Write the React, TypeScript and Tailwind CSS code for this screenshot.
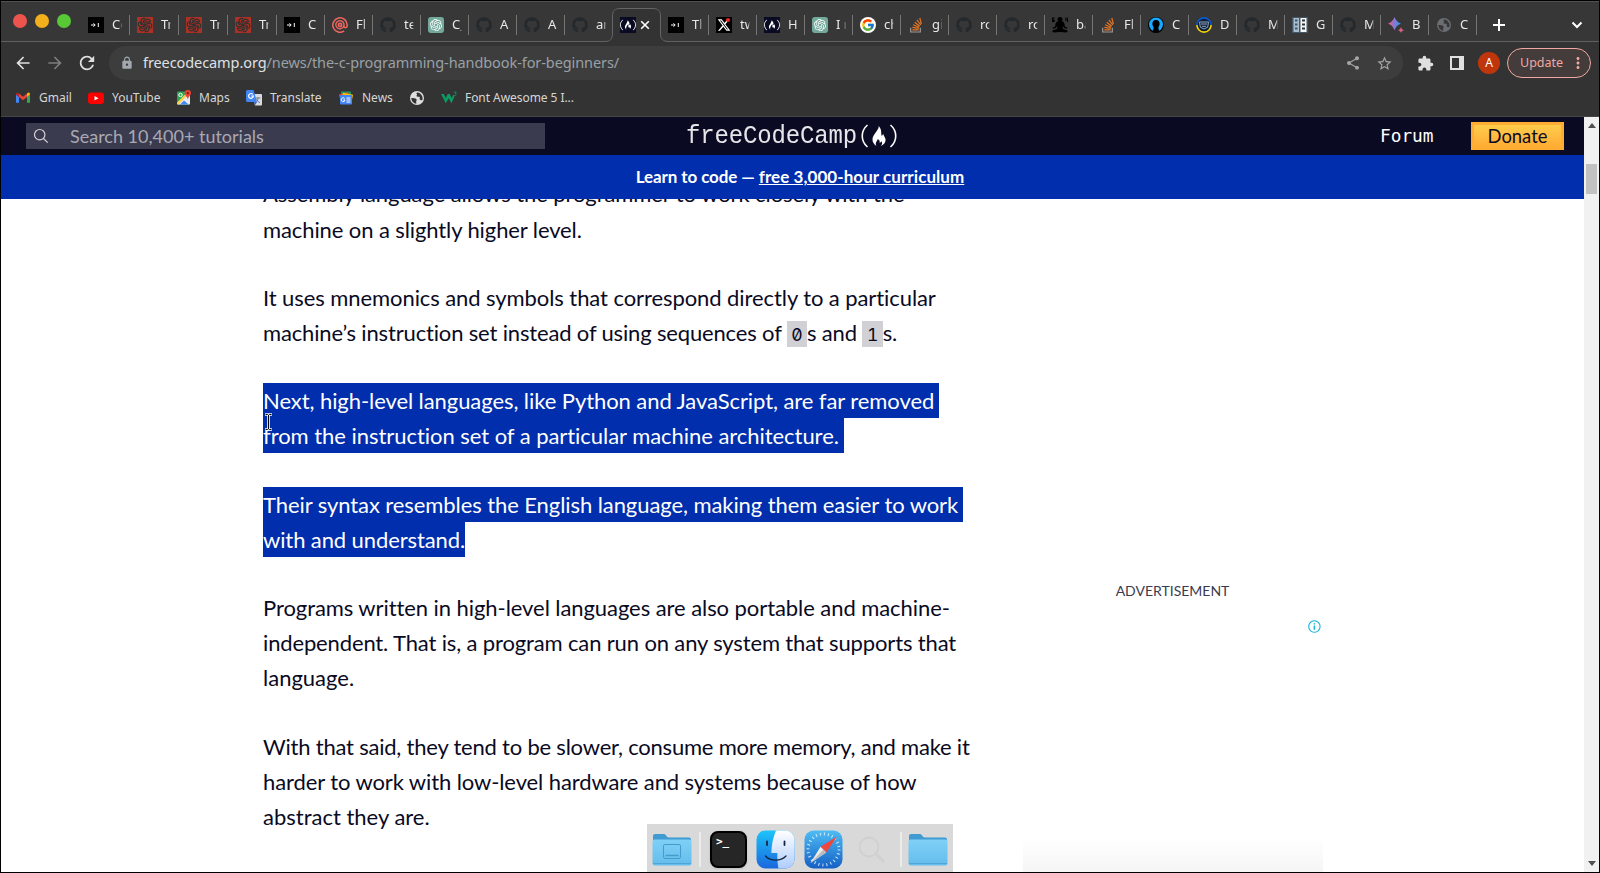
import type { ReactNode } from "react";
import { FaGithub, FaFreeCodeCamp } from "react-icons/fa";
import { FaXTwitter } from "react-icons/fa6";
import { FcGoogle } from "react-icons/fc";
import { SiOpenai } from "react-icons/si";
import {
  MdArrowBack,
  MdArrowForward,
  MdRefresh,
  MdLock,
  MdShare,
  MdStarBorder,
  MdExtension,
  MdMoreVert,
} from "react-icons/md";

const ArrowIcon = () => (
  <svg viewBox="0 0 16 16" className="size-4">
    <rect width="16" height="16" fill="#000" />
    <path d="M3 8h4M5.500 6.300 7.200 8 5.500 9.700M10.300 6v4" stroke="#fff" strokeWidth="1" fill="none" />
  </svg>
);

const CodewarsIcon = () => (
  <svg viewBox="0 0 16 16" className="size-4" fill="none" stroke="#33302f" strokeWidth="1.200" strokeLinecap="round">
    <rect width="16" height="16" fill="#ac3025" stroke="none" />
    {[0, 60, 120, 180, 240, 300].map((angle) => (
      <path key={angle} d="M8 8C7.500 5.500 8.200 3.300 10 2.300 11.800 1.800 13.200 3 13.600 4.600M9.500 5.400c1.100-1.100 2.500-.8 3 .1" transform={`rotate(${angle} 8 8)`} />
    ))}
  </svg>
);

const AtIcon = () => (
  <svg viewBox="0 0 16 16" className="size-4" fill="none" stroke="#f2675f">
    <circle cx="8" cy="8" r="1.600" strokeWidth="1.600" />
    <path d="M12.200 13.900A7.200 7.200 0 1 1 15.200 8v.6c0 2.700-3.300 2.700-3.500.3" strokeWidth="1.500" />
    <path d="M11.800 9A4.100 4.100 0 1 1 12 7.500V9" strokeWidth="1.400" />
  </svg>
);

const GithubIcon = () => <FaGithub className="size-4 text-[#24292e]" />;

const GptIcon = () => (
  <span className="flex size-4 items-center justify-center rounded-[3px] bg-[#74aa9c]">
    <SiOpenai className="size-3 text-white" />
  </span>
);

const FccIcon = () => (
  <span className="flex size-4 items-center justify-center bg-[#0a0a23]">
    <FaFreeCodeCamp className="size-4 text-white" />
  </span>
);

const XIcon = () => (
  <span className="relative flex size-4 items-center justify-center bg-black">
    <FaXTwitter className="size-3.5 text-white" />
    <span className="absolute top-px right-0.5 size-1 rounded-full bg-[#f4212e]" />
  </span>
);

const GoogleIcon = () => (
  <span className="flex size-4 items-center justify-center rounded-full bg-white">
    <FcGoogle className="size-3.5" />
  </span>
);

const StackIcon = () => (
  <svg viewBox="0 0 16 16" className="size-4" fill="none">
    <path d="M2.700 10.700v4.300h9.600v-4.300" stroke="#9a9c9f" strokeWidth="1.200" />
    <path d="M4.300 12.800h6.400M4.400 10.300l6.300 1M5.100 7.800l5.900 2.500M6.700 5.200l5 4M8.900 2.800l3.800 5.200M11.800 1l1.500 6.200" stroke="#e87722" strokeWidth="1.200" />
  </svg>
);

const MeditateIcon = () => (
  <svg viewBox="0 0 16 16" className="size-4" fill="#000">
    <path d="M0 .5h2.700v1H1v1h1.700v2.600H0zM13.300.5h1v2h.7v-2h1v4.600h-1V3.500h-1.700z" />
    <path d="M8 0a2.300 2.300 0 0 1 1.500 4.200c2 .4 2.600 1 3 2.800l.4 2.500 2.600 1.300-.4.900-2.900-.7L10.700 9l.2 2.700 4 1.500c1.100.6.800 2.200-.5 2.300L8 15l-6.400.5c-1.300-.1-1.600-1.700-.5-2.300l4-1.500L5.300 9l-1.500 2-2.900.7-.4-.9L3.100 9.500 3.500 7c.4-1.800 1-2.400 3-2.800A2.300 2.300 0 0 1 8 0z" />
  </svg>
);

const HeadIcon = () => (
  <svg viewBox="0 0 16 16" className="size-4">
    <circle cx="8" cy="8" r="8" fill="#000" />
    <circle cx="8" cy="7.500" r="7" fill="#18a8ff" />
    <path d="M8 3c2.500 0 3.800 1.800 3.600 4.200-.1 1.500-1 2.300-1.200 3.300l.8 4.700H4.800l.8-4.700c-.2-1-1.100-1.800-1.200-3.300C4.200 4.800 5.500 3 8 3z" fill="#000" />
  </svg>
);

const BadgeIcon = () => (
  <svg viewBox="0 0 16 16" className="size-4" fill="none">
    <circle cx="8" cy="8" r="7.600" fill="#0f1f38" />
    <path d="M.9 8a7.100 7.100 0 0 1 14.200 0" stroke="#0a5ad0" strokeWidth="1.600" />
    <path d="M.9 8a7.100 7.100 0 0 0 14.200 0" stroke="#f6d500" strokeWidth="1.600" />
    <path d="M3.500 5h9l-.8 5.200L8 12l-3.700-1.800z" stroke="#8fa6c0" />
    <path d="M5 7h6M6 9.300h4" stroke="#8fa6c0" />
  </svg>
);

const ColumnsIcon = () => (
  <svg viewBox="0 0 16 16" className="size-4">
    <rect width="16" height="16" fill="#435766" />
    <rect x="1.500" y="1" width="5.500" height="14" fill="#a9bccb" />
    <rect x="8.500" y="1" width="6" height="14" fill="#f7f7f7" />
    <path d="M3 3.500h2.500M3 7.500h2.500M3 11.500h2.500" stroke="#435766" strokeWidth="1.800" />
    <path d="M10 3.500h3M10 7.500h3M10 11.500h3" stroke="#30343a" strokeWidth="1.800" />
  </svg>
);

const SparkIcon = () => (
  <svg viewBox="0 0 16 16" className="size-4">
    <defs>
      <linearGradient id="spark" x1="0" y1="0" x2="1" y2="0">
        <stop offset="0" stopColor="#e8607e" />
        <stop offset=".45" stopColor="#9173cf" />
        <stop offset="1" stopColor="#1ba0f0" />
      </linearGradient>
    </defs>
    <path d="M6.500 0C7.900 3.500 9.500 5.100 13 6.500 9.500 7.900 7.900 9.700 6.500 13.300 5.100 9.700 3.500 7.900 0 6.500 3.500 5.100 5.100 3.500 6.500 0z" fill="url(#spark)" />
    <path d="M13 10c.6 1.900 1.200 2.600 3 3.200-1.800.6-2.400 1.200-3 2.800-.6-1.600-1.200-2.200-3-2.800 1.800-.6 2.400-1.300 3-3.200z" fill="#d95f80" />
  </svg>
);

const GlobeIcon = ({ land, sea }: { land: string; sea: string }) => (
  <svg viewBox="0 0 16 16" className="size-4">
    <circle cx="8" cy="8" r="7" fill={sea} />
    <path d="M2.300 8c2 .2 4.300.1 5.200 1.300.8 1.200-.8 1.800-.3 3l.2 1.500C4.500 13.500 2.400 11 2.300 8zM8.500 2.400c-1.400 0-1.300 1.200-.6 1.700.8.700-.9 1.200-.3 2.200.8 1 2.200-.2 3 .8.700 1-.4 1.600.4 2.700.7.800 1.900.4 2.400.1C14.400 6.500 12 2.800 8.500 2.400z" fill={land} />
  </svg>
);

type Tab = { icon: ReactNode; title: string; active?: boolean; wide?: boolean };

const tabs: Tab[] = [
  { icon: <ArrowIcon />, title: "Co", wide: true },
  { icon: <CodewarsIcon />, title: "Tr", wide: true },
  { icon: <CodewarsIcon />, title: "Tr", wide: true },
  { icon: <CodewarsIcon />, title: "Tr", wide: true },
  { icon: <ArrowIcon />, title: "C" },
  { icon: <AtIcon />, title: "Fl" },
  { icon: <GithubIcon />, title: "te" },
  { icon: <GptIcon />, title: "C_" },
  { icon: <GithubIcon />, title: "A" },
  { icon: <GithubIcon />, title: "A" },
  { icon: <GithubIcon />, title: "an" },
  { icon: <FccIcon />, title: "", active: true },
  { icon: <ArrowIcon />, title: "Th" },
  { icon: <XIcon />, title: "tw" },
  { icon: <FccIcon />, title: "H" },
  { icon: <GptIcon />, title: "I n" },
  { icon: <GoogleIcon />, title: "ch" },
  { icon: <StackIcon />, title: "gi" },
  { icon: <GithubIcon />, title: "ro" },
  { icon: <GithubIcon />, title: "ro" },
  { icon: <MeditateIcon />, title: "ba" },
  { icon: <StackIcon />, title: "Fl" },
  { icon: <HeadIcon />, title: "C" },
  { icon: <BadgeIcon />, title: "D" },
  { icon: <GithubIcon />, title: "M" },
  { icon: <ColumnsIcon />, title: "G" },
  { icon: <GithubIcon />, title: "M" },
  { icon: <SparkIcon />, title: "B" },
  { icon: <GlobeIcon land="#373737" sea="#6a6e73" />, title: "C" },
];

function TabStrip() {
  return (
    <div className="relative flex h-[41px] shrink-0 border-t border-[#505050] bg-[#373737] text-[13px] text-[#e8e8e8]">
      <div className="absolute inset-x-0 bottom-0 h-px bg-[#606060]" />
      <div className="flex w-20 items-center gap-2 pb-0.5 pl-3">
        <span className="size-3.5 rounded-full bg-[#ed544d]" />
        <span className="size-3.5 rounded-full bg-[#f3b01c]" />
        <span className="size-3.5 rounded-full bg-[#59c837]" />
      </div>
      {tabs.map((tab, i) =>
        tab.active ? (
          <div key={i} className="relative flex w-12 items-center pt-1.5 pl-[7px]">
            <svg viewBox="0 0 64 34" className="absolute top-1.5 -left-2 h-[34px] w-16">
              <path d="M0 33.500C5 33.500 7.500 31 7.500 26V8C7.500 3 10 .5 15 .5H48C53 .5 55.500 3 55.500 8V26C55.500 31 58 33.500 63 33.500V34H0z" fill="#333" />
              <path d="M0 33.500C5 33.500 7.500 31 7.500 26V8C7.500 3 10 .5 15 .5H48C53 .5 55.500 3 55.500 8V26C55.500 31 58 33.500 64 33.500" fill="none" stroke="#656565" />
            </svg>
            <span className="relative">{tab.icon}</span>
            <svg viewBox="0 0 10 10" className="relative ml-1 size-2.5" stroke="#fff" strokeWidth="1.600">
              <path d="m1.200 1.200 7.600 7.600M8.800 1.200 1.200 8.800" />
            </svg>
          </div>
        ) : (
          <div key={i} className={tab.wide ? "flex w-[49px] items-center pt-1.5 pl-[7px]" : "flex w-12 items-center pt-1.5 pl-[7px]"}>
            {tab.icon}
            <span className="ml-2 h-5 w-2.5 overflow-hidden mask-r-from-80% leading-[19px] whitespace-nowrap">{tab.title}</span>
            {!tabs[i + 1]?.active && <span className="ml-auto h-5 w-px bg-[#757575]" />}
          </div>
        ),
      )}
      <div className="flex grow items-center justify-between pt-1.5 pr-4 pl-4">
        <svg viewBox="0 0 12 12" className="size-3" stroke="#fff" strokeWidth="2">
          <path d="M0 6h12M6 0v12" />
        </svg>
        <svg viewBox="0 0 12 12" className="size-3" stroke="#fff" strokeWidth="2" fill="none">
          <path d="m1.500 3.500 4.500 4.500 4.500-4.500" />
        </svg>
      </div>
    </div>
  );
}

function Toolbar() {
  return (
    <div className="flex h-[42px] shrink-0 items-center bg-[#333] text-[#e0e0e0]">
      <div className="flex w-[108px] items-center gap-3.5 pl-[13px]">
        <MdArrowBack className="size-[18px] scale-110" />
        <MdArrowForward className="size-[18px] scale-110 text-[#7d7d7d]" />
        <MdRefresh className="size-[18px] scale-[1.2]" />
      </div>
      <div className="flex h-[34px] w-[1294px] items-center rounded-full bg-[#3d3d3d] pr-2.5 pl-[11px]">
        <MdLock className="size-3.5 text-[#a3a8ae]" />
        <span className="ml-[9px] pb-px text-[14.500px] tracking-[-0.085px] text-[#9aa0a6]">
          <span className="text-[#dee1e5]">freecodecamp.org</span>/news/the-c-programming-handbook-for-beginners/
        </span>
        <MdShare className="ml-auto size-4 text-[#a5a5a5]" />
        <MdStarBorder className="ml-[15px] size-[17px] text-[#a5a5a5]" />
      </div>
      <MdExtension className="ml-[14px] size-[17px]" />
      <svg viewBox="0 0 14 14" className="ml-4 size-3.5">
        <path d="M0 0h14v14H0zM2 2v10h7V2z" fill="#e0e0e0" fillRule="evenodd" />
      </svg>
      <span className="ml-3.5 flex size-[22px] items-center justify-center rounded-full bg-[#bf360c] text-xs text-white">A</span>
      <div className="ml-[7px] flex h-[30px] w-[84px] items-center rounded-full border border-[#f2a9a3] bg-[#443b3b] pl-3 text-[12.500px] text-[#f0a8a2]">
        Update
        <MdMoreVert className="ml-1.5 size-[18px]" />
      </div>
    </div>
  );
}

const GmailIcon = () => (
  <svg viewBox="0 0 16 16" className="size-4">
    <path d="M1 4.500v8.300h3V7z" fill="#4285f4" />
    <path d="M15 4.500v8.300h-3V7z" fill="#34a853" />
    <path d="M1 4.500 4 7V3.700L2.500 2.800C1.700 2.500 1 3.300 1 4.500z" fill="#c5221f" />
    <path d="M4 3.500 8 6.700l4-3.200V7L8 10.200 4 7z" fill="#ea4335" />
    <path d="M15 4.500 12 7V3.500l1.500-.9c.8-.3 1.500.6 1.500 1.900z" fill="#fbbc04" />
  </svg>
);

const YoutubeIcon = () => (
  <svg viewBox="0 0 16 16" className="size-4">
    <rect y="2.500" width="16" height="11.500" rx="3" fill="#f00" />
    <path d="m6.500 5.900 4 2.300-4 2.300z" fill="#fff" />
  </svg>
);

const MapsIcon = () => (
  <svg viewBox="0 0 16 16" className="size-4">
    <rect x="1" y="1.500" width="13" height="13" rx="1" fill="#2da352" />
    <path d="M1.500 14.500 14 2v11.500a1 1 0 0 1-1 1z" fill="#e8eaed" />
    <path d="m4 14.500 4-4 4.500 4z" fill="#4285f4" />
    <path d="m1 12.500 11-11 1.500 1.200L2.500 14.500H2a1 1 0 0 1-1-1z" fill="#fdd04a" />
    <circle cx="4.500" cy="5" r="1.700" fill="none" stroke="#fff" />
    <path d="M11.800 0a3.200 3.200 0 0 1 3.200 3.200c0 2.300-2.600 2.900-3.200 6.300-.6-3.400-3.200-4-3.200-6.300A3.200 3.200 0 0 1 11.800 0z" fill="#ea4335" />
    <circle cx="11.800" cy="3.200" r="1.100" fill="#811411" />
  </svg>
);

const TranslateIcon = () => (
  <svg viewBox="0 0 16 16" className="size-4">
    <path d="M6 4h9a1 1 0 0 1 1 1v9.500a1 1 0 0 1-1 1H9z" fill="#dadce0" />
    <path d="M9.500 8h5M12 7v1c0 2-1 3.500-2 4.500M10.500 9c1 2 2 3 3.500 3.800" stroke="#6b7785" strokeWidth=".9" fill="none" />
    <path d="M1.500 0h6L11 12H1.500A1.500 1.500 0 0 1 0 10.500v-9A1.500 1.500 0 0 1 1.500 0z" fill="#4285f4" />
    <path d="m8 12 3 0-1.800 3z" fill="#3367d6" />
    <path d="M6.800 4.300A2.400 2.400 0 1 0 7.400 6H5.200" stroke="#fff" strokeWidth="1.200" fill="none" />
  </svg>
);

const NewsIcon = () => (
  <svg viewBox="0 0 16 16" className="size-4">
    <rect x="3" y="1.500" width="10" height="6" rx=".7" fill="#17a05d" />
    <path d="M1 4.500 10 2l1.500 5L2 9z" fill="#ea4335" />
    <path d="m5 2.800 10 1.900-1 5L4 8z" fill="#ffc107" />
    <rect x="2" y="5" width="12" height="9.500" rx="1" fill="#4285f4" />
    <path d="M6.600 8.500A1.900 1.900 0 1 0 7 10H5.300M8.500 8h4M8.500 10h4M8.500 12h4" stroke="#fff" fill="none" />
  </svg>
);

const W3Icon = () => (
  <svg viewBox="0 0 16 16" className="size-4">
    <path d="M0 4h2.800l2 4.300L6.700 4h2l1.900 4.300L12.400 4.600l1 2.200-3 6.400-2.700-5-2.900 5z" fill="#0a9d63" />
    <path d="M12.800 2h2.500l-1.200 1.500c1.500.2 1.500 2-.3 2l-1-.3" stroke="#0a9d63" strokeWidth=".8" fill="none" />
  </svg>
);

function Bookmarks() {
  const item = "flex h-5 items-center gap-2";
  return (
    <div className="flex h-[33px] shrink-0 items-start border-b border-[#454545] bg-[#333] pt-1 pl-3.5 text-[12px] leading-[18px] whitespace-nowrap text-[#d6d6d6]">
      <div className={`${item} w-[73px]`}><GmailIcon /><span className="pb-px">Gmail</span></div>
      <div className={`${item} w-[88px]`}><YoutubeIcon /><span className="pb-px">YouTube</span></div>
      <div className={`${item} w-[70px]`}><MapsIcon /><span className="-ml-px pb-px">Maps</span></div>
      <div className={`${item} w-[92px]`}><TranslateIcon /><span className="pb-px">Translate</span></div>
      <div className={`${item} w-[71px]`}><NewsIcon /><span className="pb-px">News</span></div>
      <div className={`${item} w-8`}><GlobeIcon land="#333" sea="#dedede" /></div>
      <div className={item}><W3Icon /><span className="pb-px tracking-[-0.060px]">Font Awesome 5 I...</span></div>
    </div>
  );
}

function SiteHeader() {
  return (
    <header className="shrink-0 font-[Lato,sans-serif] [font-variant-ligatures:none]">
      <div className="flex h-[38px] items-center bg-[#0a0a23]">
        <div className="ml-[25px] flex h-[26px] w-[519px] items-center bg-[#3b3b4f] pl-[7px]">
          <svg viewBox="0 0 16 16" className="size-4" fill="none" stroke="#d0d0d5" strokeWidth="1.200">
            <circle cx="6.700" cy="6.700" r="5.200" />
            <path d="m10.500 10.500 4.200 4.200" />
          </svg>
          <span className="ml-[21px] text-lg leading-6 text-[#a9a9b3]">Search 10,400+ tutorials</span>
        </div>
        <div className="ml-[141px] flex h-full w-[212px] items-center text-white">
          <span className="origin-left scale-y-110 font-['Liberation_Mono',monospace] text-[24px] tracking-[-0.150px] text-[#e6e6ea]">freeCodeCamp</span>
          <svg viewBox="0 0 38 26" className="ml-[3px] h-[26px] w-[38px]" fill="none" stroke="#fff" strokeWidth="1.600">
            <path d="M7.500 2C.5 8 .5 18 7.500 24M30.500 2c7 6 7 16 0 22" />
            <path d="M18.500 3c1.500 3-5.500 8-6 13-.2 3 1.500 5.500 4 7-1.800-3 .5-4.500 1.300-7 2 1.200 2.200 2.500 1.700 3.700 1.500-.3 1.800-1 1.800-1.800 1.500 2 .8 3.800-.6 5.100 3.300-1.200 5.300-4 4.800-7-.4-2-1.800-3.300-2.300-5.300-.5.8-.7 1.800-1.500 2.300-1-3 .5-7-3.200-10z" fill="#fff" stroke="none" />
          </svg>
        </div>
        <span className="ml-auto font-['DejaVu_Sans_Mono',monospace] text-[17.800px] text-white">Forum</span>
        <span className="mr-5 ml-[37.500px] flex h-7 w-[93px] items-center justify-center border-3 border-[#ffac33] bg-linear-to-b from-[#fecc4c] to-[#ffac33] text-[18.400px] leading-5 text-[#0a0a23]">
          Donate
        </span>
      </div>
      <div className="flex h-11 items-center justify-center bg-[#002ead] pl-[15px] text-[17px] font-bold text-white">
        <p className="whitespace-nowrap">
          <span className="tracking-[-0.100px]">Learn to code — </span>
          <span className="tracking-[0.060px] underline">free 3,000-hour curriculum</span>
        </p>
      </div>
    </header>
  );
}

const Selected = ({ children, className = "" }: { children: ReactNode; className?: string }) => (
  <span className={`block w-fit bg-[#002ead] text-white ${className}`}>{children}</span>
);

const Line = ({ children, className = "" }: { children: ReactNode; className?: string }) => (
  <span className={`block h-[35.200px] ${className}`}>{children}</span>
);

const Code = ({ children }: { children: ReactNode }) => (
  <code className="bg-[#d0d0d5] px-[4.500px] pt-[3px] pb-0.5 font-[Inter,sans-serif] text-[17.600px] slashed-zero tabular-nums">{children}</code>
);

function Article() {
  return (
    <main className="-mt-[22.600px] ml-[262px] flex h-fit w-[760px] shrink-0 flex-col gap-[33px] font-[Lato,sans-serif] text-[22px] leading-[35.200px] whitespace-nowrap text-[#0a0a23] [font-variant-ligatures:none]">
      <p>
        <Line className="tracking-[-0.080px]">Assembly language allows the programmer to work closely with the</Line>
        <Line className="tracking-[-0.100px]">machine on a slightly higher level.</Line>
      </p>
      <p>
        <Line className="tracking-[-0.080px]">It uses mnemonics and symbols that correspond directly to a particular</Line>
        <Line className="tracking-[-0.160px]">
          machine’s instruction set instead of using sequences of <Code>0</Code>s and <Code>1</Code>s.
        </Line>
      </p>
      <p>
        <Selected className="pr-[5px] tracking-[-0.075px]">Next, high-level languages, like Python and JavaScript, are far removed</Selected>
        <Selected className="mb-[0.200px] h-[35px] pr-[5px] tracking-[-0.045px]">from the instruction set of a particular machine architecture.</Selected>
      </p>
      <p>
        <Selected className="pr-[5px] tracking-[-0.080px]">Their syntax resembles the English language, making them easier to work</Selected>
        <Selected className="tracking-[-0.100px]">with and understand.</Selected>
      </p>
      <p>
        <Line className="tracking-[-0.070px]">Programs written in high-level languages are also portable and machine-</Line>
        <Line className="tracking-[-0.140px]">independent. That is, a program can run on any system that supports that</Line>
        <Line>language.</Line>
      </p>
      <p>
        <Line className="tracking-[-0.210px]">With that said, they tend to be slower, consume more memory, and make it</Line>
        <Line className="tracking-[-0.100px]">harder to work with low-level hardware and systems because of how</Line>
        <Line>abstract they are.</Line>
      </p>
    </main>
  );
}

function Sidebar() {
  return (
    <aside className="flex w-[300px] shrink-0 flex-col items-center font-[Lato,sans-serif]">
      <span className="mt-[382px] ml-[-1px] text-[14px] leading-5 text-[#3b3b4f]">ADVERTISEMENT</span>
      <svg viewBox="0 0 14 14" className="mt-[18px] mr-0.5 size-3.5 self-end" fill="none" stroke="#15b4d8">
        <circle cx="7.400" cy="7.500" r="5.700" strokeWidth="1.100" />
        <path d="M7.400 6.500v4.200M7.400 4.200v1.300" strokeWidth="1.500" />
      </svg>
      <div className="mt-auto h-[34px] w-full bg-linear-to-b from-white to-[#f5f5f6]" />
    </aside>
  );
}

function Scrollbar() {
  return (
    <div className="flex w-[15px] shrink-0 flex-col items-center bg-[#f1f1f1]">
      <svg viewBox="0 0 8 5" className="mt-1.5 h-[5px] w-2"><path d="M0 5h8L4 0z" fill="#505050" /></svg>
      <div className="mt-9 h-[30px] w-[11px] bg-[#c1c1c1]" />
      <svg viewBox="0 0 8 5" className="mt-auto mb-1.5 h-[5px] w-2"><path d="M0 0h8L4 5z" fill="#505050" /></svg>
    </div>
  );
}

const Folder = ({ desktop }: { desktop?: boolean }) => (
  <svg viewBox="0 0 40 33" className="h-[33px] w-10">
    <defs>
      <linearGradient id="folder" x1="0" y1="0" x2="0" y2="1">
        <stop offset="0" stopColor="#7fd0f6" />
        <stop offset="1" stopColor="#64bdec" />
      </linearGradient>
    </defs>
    <path d="M1 3a2 2 0 0 1 2-2h9c2 0 2.500 3.500 5 3.500h20a2 2 0 0 1 2 2V15H1z" fill="#3f9bd1" />
    <path d="M.5 9c0-1.500.5-2.500 2-2.500h35c1.500 0 2 1 2 2.500v21a2.500 2.500 0 0 1-2.500 2.500H3A2.500 2.500 0 0 1 .5 30z" fill="url(#folder)" />
    <path d="M1 30.500h38" stroke="#4fa5d5" />
    {desktop && (
      <g fill="none" stroke="#459bcb">
        <rect x="11.500" y="11.500" width="17" height="14" rx="1.500" />
        <path d="M13.500 22.500h13" strokeWidth="1.500" />
      </g>
    )}
  </svg>
);

function Dock() {
  return (
    <div className="absolute bottom-0 left-[646px] flex h-12 w-[306px] items-center bg-[#d9d9d9] pt-[3px]">
      <span className="ml-[5px]"><Folder desktop /></span>
      <span className="ml-[7px] h-[35px] w-0.5 bg-[#ececec]" />
      <span className="ml-[9px] flex size-[37px] rounded-lg border-2 border-black bg-[#262626] pt-px pl-1 font-['DejaVu_Sans_Mono',monospace] text-[11px] font-bold text-white shadow">
        &gt;_
      </span>
      <svg viewBox="0 0 39 39" className="ml-[9px] size-[39px]">
        <defs>
          <linearGradient id="finderBlue" x1="0" y1="0" x2="0" y2="1">
            <stop offset="0" stopColor="#1cc4fa" />
            <stop offset="1" stopColor="#1b67dd" />
          </linearGradient>
          <linearGradient id="finderWhite" x1="0" y1="0" x2="0" y2="1">
            <stop offset="0" stopColor="#fff" />
            <stop offset="1" stopColor="#aecdff" />
          </linearGradient>
        </defs>
        <rect x=".5" y=".5" width="38" height="38" rx="9" fill="url(#finderBlue)" />
        <path d="M20 .5h9.500a9 9 0 0 1 9 9v20a9 9 0 0 1-9 9h-7c-.8-4-1.200-8-1.200-15.500h-6C15.500 15 17 8 20 .5z" fill="url(#finderWhite)" />
        <path d="M11 11.500v3.500M28.500 11.500v3.500" stroke="#17263c" strokeWidth="1.800" strokeLinecap="round" />
        <path d="M9.500 26c5 5.500 15 5.500 20.500 0" stroke="#14243a" strokeWidth="1.300" fill="none" strokeLinecap="round" />
      </svg>
      <svg viewBox="0 0 39 39" className="ml-[9px] size-[39px]">
        <defs>
          <linearGradient id="safari" x1="0" y1="0" x2="0" y2="1">
            <stop offset="0" stopColor="#4dbdf4" />
            <stop offset="1" stopColor="#1560c5" />
          </linearGradient>
        </defs>
        <rect x=".5" y=".5" width="38" height="38" rx="9" fill="url(#safari)" />
        <circle cx="19.500" cy="19.500" r="15.500" fill="none" stroke="#d9efff" strokeWidth="3" strokeDasharray=".9 3.158" />
        <path d="M33 6.500 16.500 16.700l5.700 5.700z" fill="#f0463d" />
        <path d="M6.500 33 16.500 16.700l5.700 5.700z" fill="#ececec" />
        <path d="m6.500 33 13-13.500 2.700 2.900z" fill="#bcbcbc" />
      </svg>
      <svg viewBox="0 0 30 30" className="ml-3.5 size-[30px]" fill="none" stroke="#d0d0d0">
        <circle cx="12" cy="12" r="9.500" strokeWidth="1.800" />
        <path d="m19 19 8 8" strokeWidth="3" />
      </svg>
      <span className="ml-[13px] h-[35px] w-0.5 bg-[#ececec]" />
      <span className="ml-1.5"><Folder /></span>
    </div>
  );
}

export default function App() {
  return (
    <div className="relative flex h-[873px] w-[1600px] flex-col overflow-hidden border border-black bg-white font-['Noto_Sans',sans-serif]">
      <TabStrip />
      <Toolbar />
      <Bookmarks />
      <div className="flex min-h-0 grow">
        <div className="flex w-[1583px] flex-col overflow-hidden">
          <SiteHeader />
          <div className="flex min-h-0 grow overflow-hidden">
            <Article />
            <Sidebar />
          </div>
        </div>
        <Scrollbar />
      </div>
      <svg viewBox="0 0 9 18" className="absolute top-[412px] left-[263px] h-[18px] w-[9px]" fill="none">
        <path d="M1 1.500h2.500l1 .8 1-.8H8M1 16.500h2.500l1-.8 1 .8H8M4.500 2v14" stroke="#fff" strokeWidth="2.600" />
        <path d="M1.500 1.500h2l1 .8 1-.8h2M1.500 16.500h2l1-.8 1 .8h2M4.500 2v14" stroke="#000" strokeWidth="1" />
      </svg>
      <Dock />
    </div>
  );
}
